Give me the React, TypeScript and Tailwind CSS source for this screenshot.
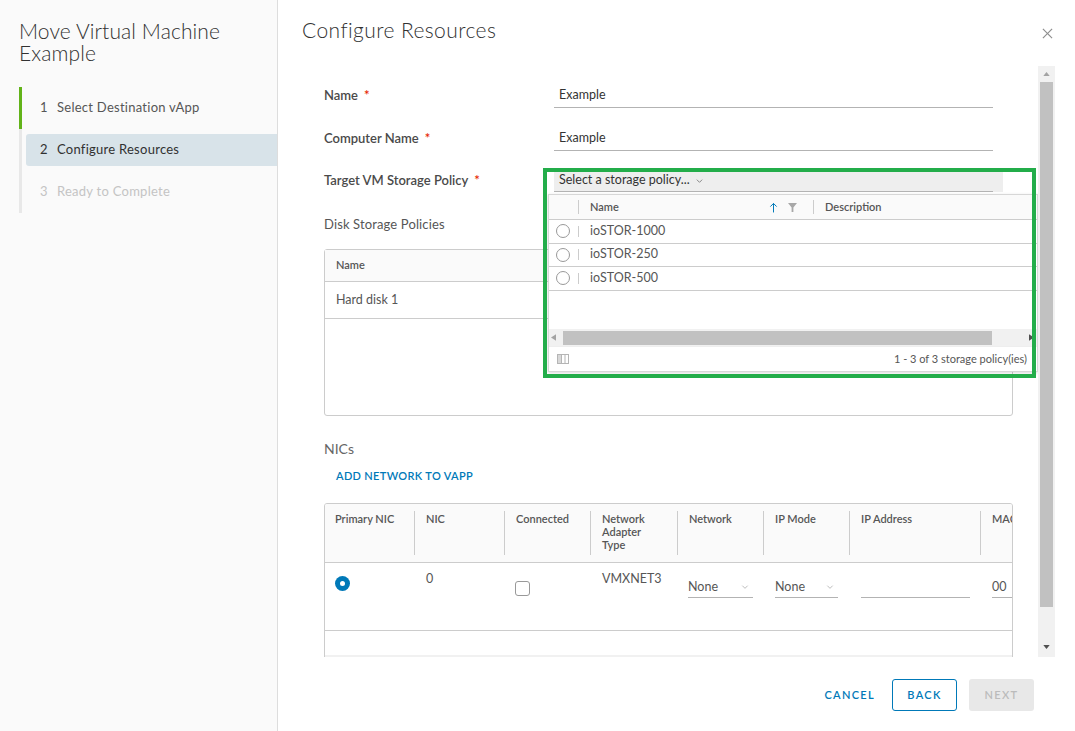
import React from 'react';

const Chevron = ({ className = '' }: { className?: string }) => (
  <svg viewBox="0 0 10 6" className={className} fill="none" stroke="currentColor" strokeWidth="1.1">
    <polyline points="1,1 5,5 9,1" />
  </svg>
);

const Req = () => <span className="ml-[6px] text-[#e62700]">*</span>;

const steps = [
  { n: 1, label: 'Select Destination vApp', state: 'done' },
  { n: 2, label: 'Configure Resources', state: 'current' },
  { n: 3, label: 'Ready to Complete', state: 'todo' },
];

const policies = ['ioSTOR-1000', 'ioSTOR-250', 'ioSTOR-500'];

const nicCols = [
  { label: 'Primary NIC', w: 'w-[89px]' },
  { label: 'NIC', w: 'w-[90px]' },
  { label: 'Connected', w: 'w-[86px]' },
  { label: 'Network Adapter Type', w: 'w-[87px]' },
  { label: 'Network', w: 'w-[86px]' },
  { label: 'IP Mode', w: 'w-[86px]' },
  { label: 'IP Address', w: 'w-[131px]' },
  { label: 'MAC', w: 'w-[60px]' },
];

const FormRow = ({ label, children, className = '' }: { label: string; children: React.ReactNode; className?: string }) => (
  <div className={`flex h-[24px] items-center ${className}`}>
    <div className="w-[230px] text-[13px] font-semibold text-[#4a4a4a]">
      {label}
      <Req />
    </div>
    {children}
  </div>
);

const TextField = ({ value }: { value: string }) => (
  <div className="flex h-[24px] w-[439px] items-center border-b border-[#b3b3b3] pl-[5px] text-[12.5px] text-[#333]">{value}</div>
);

const SmallSelect = ({ w }: { w: string }) => (
  <div className={`flex h-[22px] ${w} items-center justify-between border-b border-[#b3b3b3] text-[12.5px] text-[#565656]`}>
    <span>None</span>
    <Chevron className="mr-[4px] h-[4px] w-[8px] text-[#a5a5a5]" />
  </div>
);

function StoragePolicyPanel() {
  return (
    <div className="absolute left-[270px] top-[128px] z-10 flex h-[178px] w-[490px] flex-col border border-[#d7d7d7] bg-white shadow-[0_1px_3px_rgba(0,0,0,0.15)]">
      <div className="flex h-[25px] shrink-0 items-center border-b border-[#ccc] bg-[#fafafa] text-[11px] font-semibold text-[#565656]">
        <div className="w-[29px]" />
        <div className="flex h-[14px] w-[235px] items-center border-l border-[#ccc] pl-[11px] pr-[16px]">
          <span>Name</span>
          <svg viewBox="0 0 10 12" className="ml-auto h-[11px] w-[9px] text-[#0079b8]" fill="none" stroke="currentColor" strokeWidth="1.1">
            <line x1="5" y1="1.5" x2="5" y2="11.5" />
            <polyline points="1.5,5 5,1.5 8.5,5" />
          </svg>
          <svg viewBox="0 0 10 10" className="ml-[10px] h-[9px] w-[9px] text-[#a8a8a8]" fill="currentColor">
            <polygon points="0,0 10,0 6,5 6,10 4,10 4,5" />
          </svg>
        </div>
        <div className="flex h-[14px] items-center border-l border-[#ccc] pl-[11px]">Description</div>
      </div>
      {policies.map((p) => (
        <div key={p} className="flex h-[23.5px] shrink-0 items-center border-b border-[#ccc] text-[12.5px] text-[#565656]">
          <div className="w-[29px] pl-[7px]">
            <div className="h-[14px] w-[14px] rounded-full border border-[#999] bg-white" />
          </div>
          <div className="h-[11px] border-l border-[#ccc]" />
          <span className="pl-[11px]">{p}</span>
        </div>
      ))}
      <div className="flex-1" />
      <div className="flex h-[17px] shrink-0 items-center bg-[#f1f1f1]">
        <svg viewBox="0 0 6 8" className="ml-[2px] h-[7px] w-[5px] text-[#a3a3a3]" fill="currentColor">
          <polygon points="6,0 6,8 0,4" />
        </svg>
        <div className="ml-[7px] h-[14px] w-[429px] bg-[#c1c1c1]" />
        <svg viewBox="0 0 6 8" className="ml-auto mr-[3px] h-[7px] w-[5px] text-[#505050]" fill="currentColor">
          <polygon points="0,0 6,4 0,8" />
        </svg>
      </div>
      <div className="flex h-[25px] shrink-0 items-center justify-between border-t border-[#eee] pl-[8px] pr-[10px] text-[11px] text-[#565656]">
        <svg viewBox="0 0 12 10" className="h-[10px] w-[12px]">
          <rect x="0.5" y="0.5" width="11" height="9" fill="#fff" stroke="#b5b5b5" />
          <rect x="1" y="1" width="3" height="8" fill="#d8d8d8" />
          <line x1="4.5" y1="0.5" x2="4.5" y2="9.5" stroke="#b5b5b5" />
          <line x1="8" y1="0.5" x2="8" y2="9.5" stroke="#b5b5b5" />
        </svg>
        <span>1 - 3 of 3 storage policy(ies)</span>
      </div>
    </div>
  );
}

function NicTable() {
  return (
    <div className="mt-[20px] w-[689px] overflow-hidden rounded-t-[3px] border border-[#ccc]">
      <div className="flex h-[59px] border-b border-[#ccc] bg-[#fafafa] py-[7px] text-[11px] font-semibold leading-[13px] text-[#565656]">
        {nicCols.map((c, i) => (
          <div key={c.label} className={`${c.w} shrink-0 pt-[1px] ${i === 0 ? 'pl-[10px]' : 'border-l border-[#ccc] pl-[11px]'}`}>
            {c.label === 'Network Adapter Type' ? (
              <>
                Network
                <br />
                Adapter
                <br />
                Type
              </>
            ) : (
              c.label
            )}
          </div>
        ))}
      </div>
      <div className="flex h-[68px] border-b border-[#ccc] text-[12.5px] leading-[16px] text-[#565656]">
        <div className="w-[89px] shrink-0 pl-[10px] pt-[13px]">
          <div className="flex h-[15px] w-[15px] items-center justify-center rounded-full bg-[#0079b8]">
            <div className="h-[5px] w-[5px] rounded-full bg-white" />
          </div>
        </div>
        <div className="w-[90px] shrink-0 pl-[12px] pt-[8px]">0</div>
        <div className="w-[86px] shrink-0 pl-[11px] pt-[18px]">
          <div className="h-[15px] w-[15px] rounded-[3px] border border-[#999] bg-white" />
        </div>
        <div className="w-[87px] shrink-0 pl-[12px] pt-[8px]">VMXNET3</div>
        <div className="w-[86px] shrink-0 pl-[11px] pt-[13px]">
          <SmallSelect w="w-[65px]" />
        </div>
        <div className="w-[86px] shrink-0 pl-[12px] pt-[13px]">
          <SmallSelect w="w-[63px]" />
        </div>
        <div className="w-[131px] shrink-0 pl-[12px] pt-[13px]">
          <div className="h-[22px] w-[109px] border-b border-[#b3b3b3]" />
        </div>
        <div className="w-[60px] shrink-0 pl-[12px] pt-[13px]">
          <div className="flex h-[22px] w-[60px] items-center border-b border-[#b3b3b3]">00</div>
        </div>
      </div>
      <div className="h-[24px]" />
      <div className="h-[17px] bg-[#f1f1f1]" />
    </div>
  );
}

export default function App() {
  return (
    <div className="flex h-[731px] w-[1075px] overflow-hidden bg-white font-['Lato',sans-serif] text-[#565656]">
      <aside className="w-[278px] shrink-0 border-r border-[#dddddd] bg-[#fafafa] pl-[19px] pt-[20px]">
        <h1 className="text-[21px] font-light leading-[22px] tracking-[0.005em] text-[#313131]">
          Move Virtual Machine
          <br />
          Example
        </h1>
        <div className="mt-[23px] flex">
          <div className="flex w-[3px] flex-col">
            <div className="h-[42px] bg-[#62b319]" />
            <div className="h-[84px] bg-[#e8e8e8]" />
          </div>
          <ol className="flex flex-1 flex-col">
            {steps.map((s) => (
              <li
                key={s.n}
                className={`my-[5px] ml-[4px] flex h-[32px] items-center rounded-l-[3px] pl-[14px] text-[13px] tracking-[0.02em] ${
                  s.state === 'current' ? 'bg-[#d8e3e9] text-[#313131]' : s.state === 'done' ? 'text-[#565656]' : 'text-[#c4c4c4]'
                }`}
              >
                <span className="w-[17px]">{s.n}</span>
                <span>{s.label}</span>
              </li>
            ))}
          </ol>
        </div>
      </aside>

      <main className="flex flex-1 flex-col">
        <header className="flex h-[66px] shrink-0 items-start justify-between pl-[24px] pr-[22px] pt-[18px]">
          <h2 className="text-[21px] font-light leading-[24px] tracking-[0.02em] text-[#313131]">Configure Resources</h2>
          <svg viewBox="0 0 12 12" className="mt-[10px] h-[11px] w-[11px] text-[#8c8c8c]" fill="none" stroke="currentColor" strokeWidth="1.2">
            <line x1="1" y1="1" x2="11" y2="11" />
            <line x1="11" y1="1" x2="1" y2="11" />
          </svg>
        </header>

        <div className="flex h-[591px] shrink-0 pr-[20px]">
          <div className="relative h-full flex-1 overflow-hidden pl-[46px] pt-[18px]">
            <FormRow label="Name">
              <TextField value="Example" />
            </FormRow>
            <FormRow label="Computer Name" className="mt-[19px]">
              <TextField value="Example" />
            </FormRow>
            <FormRow label="Target VM Storage Policy" className="mt-[18px]">
              <div className="flex h-[21px] w-[449px] items-center bg-[#eeeeee]">
                <div className="flex h-full w-[439px] items-center border-b border-[#b3b3b3] pl-[5px] text-[12.5px] text-[#333]">
                  Select a storage policy...
                  <Chevron className="ml-[6px] h-[4px] w-[7px] text-[#666]" />
                </div>
              </div>
            </FormRow>

            <div className="mt-[23px] text-[13px] leading-[16px] tracking-[0.01em] text-[#565656]">Disk Storage Policies</div>
            <div className="mt-[17px] h-[167px] w-[689px] rounded-[3px] border border-[#ccc]">
              <div className="flex h-[32px] items-center border-b border-[#ccc] bg-[#fafafa] pl-[11px] text-[11px] font-semibold text-[#565656]">Name</div>
              <div className="flex h-[37px] items-center border-b border-[#ccc] pl-[11px] text-[12.5px] text-[#565656]">Hard disk 1</div>
            </div>

            <div className="mt-[24px] text-[14px] leading-[18px] text-[#666]">NICs</div>
            <div className="mt-[11px] pl-[12px] text-[11px] font-semibold leading-[14px] tracking-[0.03em] text-[#0079b8]">ADD NETWORK TO VAPP</div>
            <NicTable />

            <StoragePolicyPanel />
            <div className="pointer-events-none absolute left-[265px] top-[102px] z-20 h-[210px] w-[493px] border-[4px] border-[#23ad4a]" />
          </div>

          <div className="flex w-[17px] shrink-0 flex-col bg-[#f1f1f1]">
            <div className="flex h-[16px] items-center justify-center">
              <svg viewBox="0 0 8 5" className="h-[4px] w-[7px] text-[#a3a3a3]" fill="currentColor">
                <polygon points="0,5 4,0 8,5" />
              </svg>
            </div>
            <div className="mx-[2px] h-[525px] bg-[#c1c1c1]" />
            <div className="flex flex-1 items-end justify-center pb-[8px]">
              <svg viewBox="0 0 8 5" className="h-[4px] w-[7px] text-[#505050]" fill="currentColor">
                <polygon points="0,0 8,0 4,5" />
              </svg>
            </div>
          </div>
        </div>

        <footer className="flex flex-1 items-start justify-end pr-[41px] pt-[22px]">
          <button className="mr-[17px] flex h-[32px] items-center text-[11px] font-semibold tracking-[0.12em] text-[#0079b8]">CANCEL</button>
          <button className="mr-[12px] flex h-[32px] w-[65px] items-center justify-center rounded-[3px] border border-[#0079b8] text-[11px] font-semibold tracking-[0.12em] text-[#0079b8]">
            BACK
          </button>
          <button className="flex h-[32px] w-[65px] items-center justify-center rounded-[3px] bg-[#e8e8e8] text-[11px] font-semibold tracking-[0.12em] text-[#bbbbbb]">
            NEXT
          </button>
        </footer>
      </main>
    </div>
  );
}
